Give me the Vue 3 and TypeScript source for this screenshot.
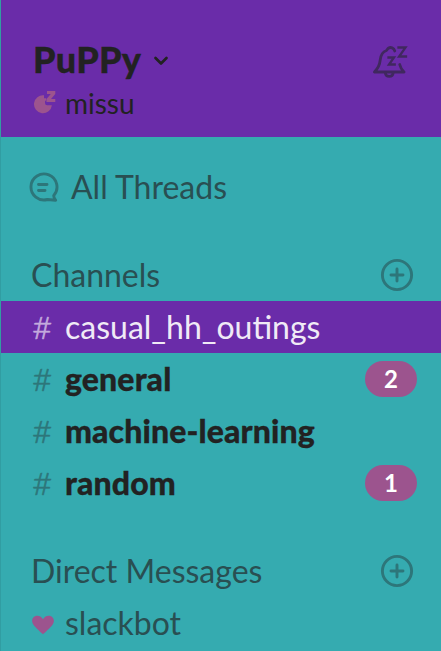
<script setup lang="ts">
interface Channel {
  name: string
  active?: boolean
  count?: number
}

const channels: Channel[] = [
  { name: 'casual_hh_outings', active: true },
  { name: 'general', count: 2 },
  { name: 'machine-learning' },
  { name: 'random', count: 1 },
]
</script>

<template>
  <aside class="sidebar">
    <header class="header">
      <div class="workspace">
        <div class="team">
          <h1>PuPPy</h1>
          <svg class="chevron" width="18" height="14" viewBox="0 0 18 14"><path d="M3.5 4 9 9.5 14.5 4" /></svg>
        </div>
        <div class="user">
          <svg class="snooze" width="24" height="24" viewBox="0 0 24 24">
            <path d="M11 4.3A9 9 0 1 0 18.9 14.3H14.3Q12 14.3 12 12V10.5L13.2 8.8V7.3H11Z" />
            <path d="M14 0H22.3V3L18 8H22.3V11H13.5V8L17.8 3H14Z" />
          </svg>
          <span>missu</span>
        </div>
      </div>
      <svg class="bell" width="38" height="38" viewBox="0 0 38 38">
        <path d="M22.8 8C21.8 4.8 18.8 3.7 16.3 5.2L14.5 7.5C10 9 8.7 12.5 8.2 17C7.7 22.5 6 25.5 2.4 29H32.1C29.5 26.8 28.4 24.5 27.7 21.5" />
        <path d="M13.3 29.5C13.6 34.7 20.9 34.7 21.2 29.5" />
        <path class="zed" d="M16.5 14.5H22L17 21.5H22.7M26.5 4.5H33.5L27.1 13.5H34" />
      </svg>
    </header>

    <nav>
      <div class="threads">
        <svg class="line-icon" width="32" height="32" viewBox="0 0 32 32">
          <path d="M26.8 23.5A13 13 0 1 0 20.5 27.5L28.7 28.2Q26.5 26 26.8 23.5M11.5 12.5H20M11.5 18.5H18" />
        </svg>
        <span>All Threads</span>
      </div>

      <section>
        <div class="section-title">
          <h2>Channels</h2>
          <svg class="line-icon" width="34" height="34" viewBox="0 0 34 34"><circle cx="17" cy="17" r="14.6" /><path d="M17 11V23M11 17H23" /></svg>
        </div>
        <div v-for="c in channels" :key="c.name" class="row" :class="{ active: c.active, unread: !c.active }">
          <span class="hash">#</span>
          <span class="name">{{ c.name }}</span>
          <span v-if="c.count" class="badge">{{ c.count }}</span>
        </div>
      </section>

      <section>
        <div class="section-title">
          <h2>Direct Messages</h2>
          <svg class="line-icon" width="34" height="34" viewBox="0 0 34 34"><circle cx="17" cy="17" r="14.6" /><path d="M17 11V23M11 17H23" /></svg>
        </div>
        <div class="row">
          <svg class="heart" width="22" height="20" viewBox="0 0 22 20"><path d="M11 19.3C9.5 18 3.5 12.7 1.5 9.8C-1.7 5 1.2.7 5.2.7C8 .7 10 2.2 11 4.3C12 2.2 14 .7 16.8.7C20.8.7 23.7 5 20.5 9.8C18.5 12.7 12.5 18 11 19.3Z" /></svg>
          <span class="name">slackbot</span>
        </div>
      </section>
    </nav>
  </aside>
</template>

<style>
body {
  margin: 0;
  overflow: hidden;
}
</style>

<style scoped>
.sidebar {
  box-sizing: border-box;
  width: 441px;
  height: 651px;
  overflow: hidden;
  border-left: 1px solid #319da2;
  background: #35abb0;
  color: #294f52;
  font: 400 32px/52px Lato, sans-serif;
}
h1,
h2 {
  margin: 0;
  font: inherit;
}
svg {
  display: block;
  flex: none;
}
.header {
  box-sizing: border-box;
  height: 137px;
  padding: 38px 31px 0 32px;
  display: flex;
  justify-content: space-between;
  background: #6a2ca9;
  color: #222;
}
.team {
  display: flex;
  align-items: center;
  gap: 11px;
  height: 44px;
}
h1 {
  font-size: 36px;
  font-weight: 900;
  line-height: 42px;
  padding-bottom: 2px;
  letter-spacing: 0.25px;
  -webkit-text-stroke: 0.3px #222;
}
.chevron {
  margin-top: 2px;
  fill: none;
  stroke: #222;
  stroke-width: 2.7;
  stroke-linecap: round;
  stroke-linejoin: round;
}
.user {
  display: flex;
  align-items: center;
  height: 42px;
  gap: 8px;
  font-size: 28px;
}
.snooze {
  margin-top: -1px;
  fill: #9c548e;
}
.bell {
  margin-top: 5px;
  fill: none;
  stroke: #40285f;
  stroke-width: 2.8;
  stroke-linecap: round;
  stroke-linejoin: round;
}
.zed {
  stroke-width: 2.3;
  stroke-linecap: square;
  stroke-linejoin: miter;
}
.threads {
  display: flex;
  align-items: center;
  height: 52px;
  margin-top: 24px;
  padding-left: 26px;
  gap: 12px;
}
.threads svg {
  margin-top: 2px;
}
.line-icon {
  fill: none;
  stroke: #2d767a;
  stroke-width: 2.9;
  stroke-linecap: round;
  stroke-linejoin: round;
}
section {
  margin-top: 36px;
}
.section-title {
  display: flex;
  align-items: center;
  justify-content: space-between;
  height: 52px;
  padding: 0 27px 0 30px;
}
.row {
  display: flex;
  align-items: center;
  height: 52px;
  padding: 0 24px 0 31px;
}
.hash {
  width: 33px;
  color: #2d767a;
  font-weight: 300;
  -webkit-text-stroke: 0.5px currentColor;
  transform: scaleX(1.1);
  transform-origin: 0 50%;
}
.heart {
  margin-right: 11px;
  margin-top: 4px;
  fill: #9c548e;
}
.active {
  background: #6a2ca9;
  color: #f0eaf6;
}
.active .hash {
  color: #c3aadd;
}
.unread .name {
  color: #222;
  font-weight: 900;
  letter-spacing: 0.12px;
  -webkit-text-stroke: 0.3px #222;
}
.badge {
  width: 52px;
  height: 36px;
  margin-left: auto;
  border-radius: 18px;
  background: #9c548e;
  color: #fff;
  font-size: 24px;
  font-weight: 700;
  line-height: 35px;
  text-align: center;
}
</style>
